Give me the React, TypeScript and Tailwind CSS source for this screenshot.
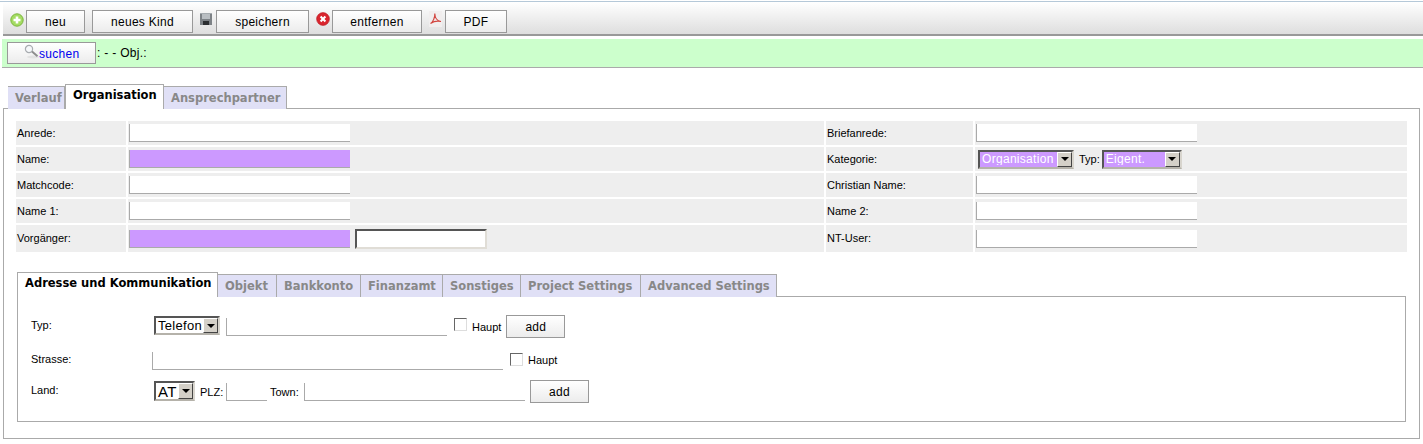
import type { ReactNode } from "react";

const uiFont = "font-['Liberation_Sans',Arial,sans-serif]";
const tabFont = "font-['DejaVu_Sans',Verdana,sans-serif]";

function PlusIcon() {
	return (
		<svg width="14" height="14" viewBox="0 0 14 14" className="shrink-0">
			<circle cx="7" cy="7" r="6.2" fill="#a4dc62" stroke="#7cb53f" />
			<path d="M7 3.5v7M3.5 7h7" stroke="#fff" strokeWidth="2.6" />
		</svg>
	);
}

function SaveIcon() {
	return (
		<svg width="12" height="12" viewBox="0 0 12 12" className="shrink-0">
			<rect width="12" height="12" fill="#7d8286" />
			<rect x="2" y="1" width="8" height="5" fill="#b9bec2" />
			<rect x="3" y="8" width="6" height="4" fill="#2b2e30" />
			<rect x="0" y="0" width="12" height="1" fill="#a5abaf" />
		</svg>
	);
}

function DeleteIcon() {
	return (
		<svg width="14" height="14" viewBox="0 0 14 14" className="shrink-0">
			<circle cx="7" cy="7" r="6.4" fill="#d9252e" stroke="#b8161f" strokeWidth="0.6" />
			<path d="M4.6 4.6l4.8 4.8M9.4 4.6l-4.8 4.8" stroke="#fff" strokeWidth="2.1" />
		</svg>
	);
}

function PdfIcon() {
	return (
		<svg width="13" height="16" viewBox="0 0 13 16" className="shrink-0">
			<rect width="13" height="16" fill="#f1eeee" />
			<path
				d="M1.5 12.5C4 11 6 6.5 5.8 2.5 6 6.5 8 10 12 10.5 8 9.5 4.5 10.5 1.5 12.5Z"
				fill="none"
				stroke="#d2453f"
				strokeWidth="1.1"
			/>
		</svg>
	);
}

function SearchIcon() {
	return (
		<svg width="16" height="15" viewBox="0 0 16 15" className="shrink-0">
			<ellipse cx="9" cy="13" rx="6" ry="1.5" fill="#e2e2e2" />
			<circle cx="5" cy="5" r="3.6" fill="#f6f8fa" stroke="#a8acb0" strokeWidth="1.2" />
			<path d="M8 7.6l5.5 4.6" stroke="#8d8d8d" strokeWidth="2" />
		</svg>
	);
}

function ActionButton({ className, children }: { className: string; children: ReactNode }) {
	return (
		<button
			type="button"
			className={`flex items-center justify-center border border-[#999] bg-linear-to-b from-white to-[#ececec] text-[12px] tracking-[0.3px] text-black ${className}`}
		>
			{children}
		</button>
	);
}

function Tab({ label, active, className }: { label: string; active?: boolean; className: string }) {
	if (active) {
		return (
			<div
				className={`relative z-10 flex items-start border border-b-0 border-[#aaa] bg-white pl-[7px] pt-[2px] text-[11.5px] font-bold whitespace-nowrap text-black ${tabFont} ${className}`}
			>
				{label}
			</div>
		);
	}
	return (
		<div
			className={`flex items-center border border-b-0 border-l-0 border-[#aaa] bg-[#e0e0f6] pl-[7px] pt-[2px] text-[11.5px] font-bold whitespace-nowrap text-[#888] ${tabFont} ${className}`}
		>
			{label}
		</div>
	);
}

function TextField({ className, purple }: { className: string; purple?: boolean }) {
	return (
		<div
			className={`border-b border-l border-[#aaa] ${purple ? "bg-[#cc99ff]" : "bg-white"} ${className}`}
		/>
	);
}

function Dropdown({
	value,
	className,
	purple,
	textClass,
}: {
	value: string;
	className: string;
	purple?: boolean;
	textClass: string;
}) {
	return (
		<div
			className={`flex shrink-0 items-stretch border-2 border-t-[#555] border-l-[#555] border-r-[#d8d5ce] border-b-[#b5b2aa] ${purple ? "bg-[#cc99ff] text-white" : "bg-white text-black"} ${className}`}
		>
			<span className={`flex-1 self-center overflow-hidden pl-[2px] leading-none tracking-[0.3px] whitespace-nowrap ${textClass}`}>
				{value}
			</span>
			<span className="flex w-[15px] shrink-0 items-center justify-center border border-t-white border-l-white border-r-[#444] border-b-[#444] bg-[#d4d0c8]">
				<svg width="8" height="4" viewBox="0 0 8 4">
					<path d="M0 0h8L4 4Z" fill="#000" />
				</svg>
			</span>
		</div>
	);
}

function Checkbox({ className }: { className: string }) {
	return (
		<div
			className={`h-[13px] w-[13px] shrink-0 border border-t-[#666] border-l-[#666] border-r-[#ddd] border-b-[#ddd] bg-white ${className}`}
		/>
	);
}

function Label({ children }: { children: ReactNode }) {
	return <div className="flex items-center bg-[#eee] pl-px text-[11px] text-black">{children}</div>;
}

function Value({ children, className }: { children: ReactNode; className?: string }) {
	return <div className={`flex items-center bg-[#eee] ${className ?? ""}`}>{children}</div>;
}

export default function App() {
	return (
		<div className={`h-[444px] w-[1423px] overflow-hidden bg-white ${uiFont}`}>
			<div className="mt-px h-[1px] bg-[#b5c8d8]" />

			<div className="ml-[3px] flex h-[34px] border-b-2 border-[#999] bg-linear-to-b from-white to-[#dedede] pl-[7px] pt-[8px]">
				<div className="mt-[3px]">
					<PlusIcon />
				</div>
				<ActionButton className="ml-[2px] h-[23px] w-[59px]">neu</ActionButton>
				<ActionButton className="ml-[7px] h-[23px] w-[101px]">neues Kind</ActionButton>
				<div className="ml-[7px] mt-[3px]">
					<SaveIcon />
				</div>
				<ActionButton className="ml-[4px] h-[23px] w-[93px]">speichern</ActionButton>
				<div className="ml-[7px] mt-[2px]">
					<DeleteIcon />
				</div>
				<ActionButton className="ml-[2px] h-[23px] w-[90px]">entfernen</ActionButton>
				<div className="ml-[7px] mt-[1px]">
					<PdfIcon />
				</div>
				<ActionButton className="ml-[3px] h-[23px] w-[62px]">PDF</ActionButton>
			</div>

			<div className="ml-[2px] mt-[3px] flex h-[29px] items-center border-b border-[#aaa] bg-[#ccffcc] pl-[5px] text-[12px] text-black">
				<button
					type="button"
					className="flex h-[22px] w-[89px] items-start border border-[#999] bg-linear-to-b from-white to-[#ececec] pl-[16px] pt-px text-[12px] tracking-[0.3px] text-[#0000ee]"
				>
					<SearchIcon />
					<span className="mt-px -ml-px">suchen</span>
				</button>
				<span className="ml-px tracking-[0.3px]">: - - Obj.:</span>
			</div>

			<div className="relative z-10 ml-[8px] mt-[16px] flex h-[25px] items-end">
				<Tab label="Verlauf" className="h-[23px] w-[57px] border-l" />
				<Tab label="Organisation" active className="h-[25px] w-[99px]" />
				<Tab label="Ansprechpartner" className="h-[23px] w-[123px]" />
			</div>

			<div className="ml-[3px] -mt-px h-[331px] w-[1417px] border border-[#aaa] pl-[12px] pt-[12px]">
				<div className="grid w-[1391px] grid-cols-[110px_696px_147px_432px] grid-rows-[24px_24px_24px_24px_27px] gap-x-[2px] gap-y-[2px]">
					<Label>Anrede:</Label>
					<Value className="pl-px">
						<TextField className="h-[18px] w-[221px]" />
					</Value>
					<Label>Briefanrede:</Label>
					<Value className="pl-px">
						<TextField className="h-[18px] w-[221px]" />
					</Value>

					<Label>Name:</Label>
					<Value className="pl-px">
						<TextField purple className="h-[18px] w-[221px]" />
					</Value>
					<Label>Kategorie:</Label>
					<Value className="pl-[3px] text-[11px]">
						<Dropdown purple value="Organisation" textClass="text-[12px]" className="h-[19px] w-[96px]" />
						<span className="ml-[5px]">Typ:</span>
						<Dropdown purple value="Eigent." textClass="text-[12px]" className="ml-[2px] h-[19px] w-[80px]" />
					</Value>

					<Label>Matchcode:</Label>
					<Value className="pl-px">
						<TextField className="h-[18px] w-[221px]" />
					</Value>
					<Label>Christian Name:</Label>
					<Value className="pl-px">
						<TextField className="h-[18px] w-[221px]" />
					</Value>

					<Label>Name 1:</Label>
					<Value className="pl-px">
						<TextField className="h-[18px] w-[221px]" />
					</Value>
					<Label>Name 2:</Label>
					<Value className="pl-px">
						<TextField className="h-[18px] w-[221px]" />
					</Value>

					<Label>Vorgänger:</Label>
					<Value className="pl-px">
						<TextField purple className="h-[18px] w-[221px]" />
						<div className="ml-[5px] h-[20px] w-[132px] border-2 border-t-[#555] border-l-[#555] border-r-[#e0ddd6] border-b-[#e0ddd6] bg-white" />
					</Value>
					<Label>NT-User:</Label>
					<Value className="pl-px">
						<TextField className="h-[18px] w-[221px]" />
					</Value>
				</div>

				<div className="relative z-10 ml-px mt-[20px] flex h-[25px] items-end">
					<Tab label="Adresse und Kommunikation" active className="h-[25px] w-[201px]" />
					<Tab label="Objekt" className="h-[23px] w-[59px]" />
					<Tab label="Bankkonto" className="h-[23px] w-[84px]" />
					<Tab label="Finanzamt" className="h-[23px] w-[82px]" />
					<Tab label="Sonstiges" className="h-[23px] w-[78px]" />
					<Tab label="Project Settings" className="h-[23px] w-[120px]" />
					<Tab label="Advanced Settings" className="h-[23px] w-[136px]" />
				</div>

				<div className="ml-px -mt-px h-[126px] w-[1389px] border border-[#aaa] pt-[18px] text-[11px] text-black">
					<div className="flex h-[23px] items-start">
						<span className="ml-[13px] mt-[2px] w-[123px]">Typ:</span>
						<Dropdown value="Telefon" textClass="text-[13px]" className="mt-px h-[19px] w-[66px]" />
						<TextField className="ml-[6px] mt-[3px] h-[18px] w-[221px]" />
						<Checkbox className="ml-[7px] mt-[3px]" />
						<span className="ml-[5px] mt-[4px]">Haupt</span>
						<ActionButton className="ml-[5px] h-[23px] w-[59px]">add</ActionButton>
					</div>
					<div className="mt-[14px] flex h-[20px] items-start">
						<span className="ml-[13px] -mt-px w-[121px]">Strasse:</span>
						<TextField className="h-[18px] w-[351px]" />
						<Checkbox className="ml-[7px] mt-px" />
						<span className="ml-[5px]">Haupt</span>
					</div>
					<div className="mt-[8px] flex h-[23px] items-start">
						<span className="ml-[13px] mt-[2px] w-[123px]">Land:</span>
						<Dropdown value="AT" textClass="text-[15px]" className="mt-px h-[20px] w-[41px]" />
						<span className="ml-[5px] mt-[4px] w-[26px]">PLZ:</span>
						<TextField className="mt-[3px] h-[18px] w-[41px]" />
						<span className="ml-[3px] mt-[4px] w-[34px]">Town:</span>
						<TextField className="mt-[3px] h-[18px] w-[221px]" />
						<ActionButton className="ml-[5px] h-[23px] w-[59px]">add</ActionButton>
					</div>
				</div>
			</div>
		</div>
	);
}
